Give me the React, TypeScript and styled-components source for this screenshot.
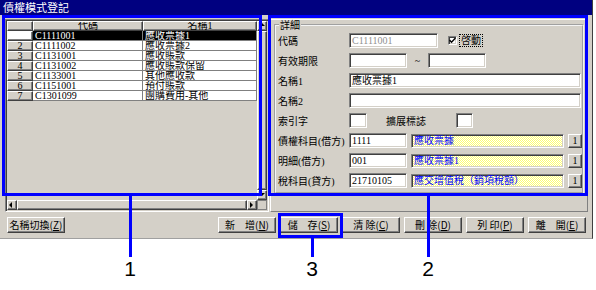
import React from 'react';
import styled, { createGlobalStyle } from 'styled-components';

const GlobalStyle = createGlobalStyle`
  html, body {
    margin: 0;
    padding: 0;
    background: #fff;
  }
  body {
    font-family: "Liberation Serif", "Noto Sans CJK TC", serif;
  }
`;

const face = `"Liberation Serif", "Noto Sans CJK TC", serif`;

const raised = `
  border: 1px solid;
  border-color: #fff #404040 #404040 #fff;
  box-shadow: inset -1px -1px #808080;
`;

const sunken = `
  border: 1px solid;
  border-color: #808080 #fff #fff #808080;
  box-shadow: inset 1px 1px #404040, inset -1px -1px #d4d0c8;
`;

const Stage = styled.div`
  position: relative;
  width: 596px;
  height: 290px;
  background: #fff;
  overflow: hidden;
`;

const Window = styled.div`
  box-sizing: border-box;
  width: 593px;
  height: 239px;
  background: #d4d0c8;
  border-right: 1px solid #404040;
  border-bottom: 1px solid #a0a0a0;
  display: flex;
  flex-direction: column;
  font-family: ${face};
  font-size: 10px;
  color: #000;
`;

const TitleBar = styled.div`
  height: 15px;
  background: #000080;
  color: #fff;
  font-family: "Noto Sans CJK TC", sans-serif;
  font-size: 11px;
  line-height: 15px;
  padding-left: 3px;
`;

const Body = styled.div`
  display: flex;
  flex-direction: column;
  padding: 4px 0 0 5px;
`;

const MainRow = styled.div`
  display: flex;
  gap: 1px;
  height: 193px;
`;

/* ---------- grid ---------- */

const GridFrame = styled.div`
  box-sizing: border-box;
  width: 264px;
  height: 193px;
  ${sunken}
  padding: 1px;
  display: grid;
  grid-template-columns: 250px 10px;
  grid-template-rows: 1fr 10px;
`;

const Table = styled.div`
  display: flex;
  flex-direction: column;
  overflow: hidden;
`;

const Row = styled.div`
  display: grid;
  grid-template-columns: 26px 110px 114px;
  height: 10px;
`;

const HeadCell = styled.div`
  box-sizing: border-box;
  ${raised}
  background: #d4d0c8;
  text-align: center;
  line-height: 8px;
  font-size: 10px;
  overflow: hidden;
  white-space: nowrap;
`;

const RowHead = styled(HeadCell)<{ $current?: boolean }>`
  background: ${p => (p.$current ? '#fff' : '#d4d0c8')};
`;

const Cell = styled.div<{ $selected?: boolean }>`
  box-sizing: border-box;
  border-right: 1px solid #808080;
  border-bottom: 1px solid #808080;
  background: ${p => (p.$selected ? '#000' : '#fff')};
  color: ${p => (p.$selected ? '#fff' : '#000')};
  padding-left: 2px;
  line-height: 9px;
  font-size: 10px;
  white-space: nowrap;
  overflow: hidden;
`;

const VScroll = styled.div`
  display: flex;
  flex-direction: column;
`;

const HScroll = styled.div`
  display: flex;
`;

const ArrowBtn = styled.div`
  box-sizing: border-box;
  width: 10px;
  height: 10px;
  ${raised}
  background: #d4d0c8;
  display: flex;
  align-items: center;
  justify-content: center;
  flex-shrink: 0;
`;

const Thumb = styled.div`
  box-sizing: border-box;
  flex: 1;
  ${raised}
  background: #d4d0c8;
`;

const Corner = styled.div`
  background: #d4d0c8;
  box-sizing: border-box;
  border: 1px solid #808080;
`;

const Tri = ({ dir }: { dir: 'up' | 'down' | 'left' | 'right' }) => {
  const pts = {
    up: '1,4 4,1 7,4',
    down: '1,2 4,5 7,2',
    left: '4,1 1,4 4,7',
    right: '2,1 5,4 2,7',
  }[dir];
  return (
    <svg width="8" height="8" viewBox="0 0 8 8">
      <polygon points={pts} fill="#000" />
    </svg>
  );
};

/* ---------- detail panel ---------- */

const DetailPanel = styled.div`
  box-sizing: border-box;
  width: 318px;
  height: 193px;
  border: 1px solid;
  border-color: #fff #808080 #808080 #fff;
  padding: 0 3px 0 3px;
`;

const GroupBox = styled.fieldset`
  margin: 0;
  padding: 3px 0 0 2px;
  height: 167px;
  border: 2px groove #f4f4f4;
  display: flex;
  flex-direction: column;
  gap: 5px;
`;

const Legend = styled.legend`
  padding: 0 1px;
  margin-left: 1px;
  font-family: "Noto Sans CJK TC", sans-serif;
  font-size: 10px;
  line-height: 10px;
`;

const FieldRow = styled.div`
  display: flex;
  align-items: center;
  height: 15px;
`;

const Label = styled.div<{ $w?: number; $gap?: number }>`
  width: ${p => p.$w ?? 71}px;
  margin-left: ${p => p.$gap ?? 0}px;
  flex-shrink: 0;
  font-size: 10px;
  white-space: nowrap;
`;

const Input = styled.div<{ $w: number; $gray?: boolean }>`
  box-sizing: border-box;
  width: ${p => p.$w}px;
  height: 15px;
  ${sunken}
  background: #fff;
  color: ${p => (p.$gray ? '#909090' : '#000')};
  padding-left: 2px;
  line-height: 13px;
  font-size: 10px;
  white-space: nowrap;
  overflow: hidden;
  flex-shrink: 0;
`;

const LookupField = styled(Input)`
  height: 14px;
  line-height: 12px;
  color: #0000ff;
  background-color: #ffffc0;
  background-image: repeating-conic-gradient(#ffff70 0 25%, #ffffff 0 50%);
  background-size: 2px 2px;
  margin-left: 4px;
`;

const PickBtn = styled.div`
  box-sizing: border-box;
  width: 14px;
  height: 14px;
  ${raised}
  background: #d4d0c8;
  margin-left: 4px;
  text-align: center;
  line-height: 12px;
  font-size: 10px;
`;

const Check = styled.div`
  display: flex;
  align-items: center;
  gap: 3px;
  margin-left: 10px;
`;

const CheckBox = styled.div`
  box-sizing: border-box;
  width: 9px;
  height: 9px;
  ${sunken}
  background: #fff;
  display: flex;
  align-items: center;
  justify-content: center;
`;

const FocusLabel = styled.span`
  outline: 1px dotted #000;
  padding: 0 1px;
  font-size: 10px;
  line-height: 11px;
`;

const Tilde = styled.span`
  width: 21px;
  text-align: center;
  font-size: 10px;
`;

/* ---------- buttons ---------- */

const ButtonRow = styled.div`
  display: flex;
  align-items: center;
  margin-top: 5px;
  height: 16px;
`;

const Spacer = styled.div`
  flex: 1;
`;

const ButtonGroup = styled.div`
  display: flex;
  gap: 4px;
  margin-right: 6px;
`;

const Button = styled.div<{ $indent?: number }>`
  box-sizing: border-box;
  width: 58px;
  height: 16px;
  margin-left: ${p => p.$indent ?? 0}px;
  ${raised}
  background: #d4d0c8;
  display: flex;
  align-items: center;
  justify-content: center;
  font-family: "Noto Sans CJK TC", sans-serif;
  font-size: 10px;
  line-height: 14px;
  white-space: pre;
`;

/* ---------- annotations ---------- */

const Box = styled.div<{ $x: number; $y: number; $w: number; $h: number }>`
  position: absolute;
  left: ${p => p.$x}px;
  top: ${p => p.$y}px;
  width: ${p => p.$w}px;
  height: ${p => p.$h}px;
  box-sizing: border-box;
  border: 3px solid #0000ff;
  pointer-events: none;
`;

const Leader = styled.div<{ $x: number; $y: number; $h: number }>`
  position: absolute;
  left: ${p => p.$x}px;
  top: ${p => p.$y}px;
  width: 3px;
  height: ${p => p.$h}px;
  background: #0000ff;
`;

const Callout = styled.div<{ $x: number }>`
  position: absolute;
  left: ${p => p.$x - 10}px;
  top: 257px;
  width: 20px;
  text-align: center;
  font-family: "Liberation Sans", Arial, sans-serif;
  font-size: 21px;
  line-height: 24px;
  color: #000;
`;

const rows = [
  ['C1111001', '應收票據1'],
  ['C1111002', '應收票據2'],
  ['C1131001', '應收賬款'],
  ['C1131002', '應收賬款保留'],
  ['C1133001', '其他應收款'],
  ['C1151001', '預付賬款'],
  ['C1301099', '團購費用-其他'],
];

const lookups = [
  ['債權科目(借方)', '1111', '應收票據'],
  ['明細(借方)', '001', '應收票據1'],
  ['稅科目(貸方)', '21710105', '應交增值稅（銷項稅額）'],
];

const buttons = [
  ['新　增', 'N'],
  ['儲　存', 'S'],
  ['清 除', 'C'],
  ['刪 除', 'D'],
  ['列 印', 'P'],
  ['離　開', 'E'],
];

export default function App() {
  return (
    <Stage>
      <GlobalStyle />
      <Window>
        <TitleBar>債權模式登記</TitleBar>
        <Body>
          <MainRow>
            <GridFrame>
              <Table>
                <Row>
                  <HeadCell />
                  <HeadCell>代碼</HeadCell>
                  <HeadCell>名稱1</HeadCell>
                </Row>
                {rows.map(([code, name], i) => (
                  <Row key={code}>
                    <RowHead $current={i === 0}>{i === 0 ? '' : i + 1}</RowHead>
                    <Cell $selected={i === 0}>{code}</Cell>
                    <Cell $selected={i === 0}>{name}</Cell>
                  </Row>
                ))}
              </Table>
              <VScroll>
                <ArrowBtn>
                  <Tri dir="up" />
                </ArrowBtn>
                <Thumb />
                <ArrowBtn>
                  <Tri dir="down" />
                </ArrowBtn>
              </VScroll>
              <HScroll>
                <ArrowBtn>
                  <Tri dir="left" />
                </ArrowBtn>
                <Thumb />
                <ArrowBtn>
                  <Tri dir="right" />
                </ArrowBtn>
              </HScroll>
              <Corner />
            </GridFrame>

            <DetailPanel>
              <GroupBox>
                <Legend>詳細</Legend>
                <FieldRow>
                  <Label>代碼</Label>
                  <Input $w={89} $gray>
                    C1111001
                  </Input>
                  <Check>
                    <CheckBox>
                      <svg width="7" height="7" viewBox="0 0 7 7">
                        <polyline points="0.5,3 2.5,5.2 6.5,1" fill="none" stroke="#000" strokeWidth="1.4" />
                      </svg>
                    </CheckBox>
                    <FocusLabel>啓動</FocusLabel>
                  </Check>
                </FieldRow>
                <FieldRow>
                  <Label>有效期限</Label>
                  <Input $w={58} />
                  <Tilde>~</Tilde>
                  <Input $w={58} />
                </FieldRow>
                <FieldRow>
                  <Label>名稱1</Label>
                  <Input $w={232}>應收票據1</Input>
                </FieldRow>
                <FieldRow>
                  <Label>名稱2</Label>
                  <Input $w={232} />
                </FieldRow>
                <FieldRow>
                  <Label>索引字</Label>
                  <Input $w={18} />
                  <Label $w={70} $gap={19}>
                    擴展標誌
                  </Label>
                  <Input $w={17} />
                </FieldRow>
                {lookups.map(([label, code, name]) => (
                  <FieldRow key={label}>
                    <Label>{label}</Label>
                    <Input $w={58}>{code}</Input>
                    <LookupField $w={153}>{name}</LookupField>
                    <PickBtn>1</PickBtn>
                  </FieldRow>
                ))}
              </GroupBox>
            </DetailPanel>
          </MainRow>

          <ButtonRow>
            <Button $indent={2}>
              名稱切換(<u>Z</u>)
            </Button>
            <Spacer />
            <ButtonGroup>
              {buttons.map(([text, key]) => (
                <Button key={key}>
                  {text}(<u>{key}</u>)
                </Button>
              ))}
            </ButtonGroup>
          </ButtonRow>
        </Body>
      </Window>

      <Box $x={2} $y={15} $w={260} $h={181} />
      <Box $x={268} $y={15} $w={320} $h={181} />
      <Box $x={278} $y={213} $w={65} $h={25} />

      <Leader $x={129} $y={195} $h={62} />
      <Leader $x={427} $y={195} $h={62} />
      <Leader $x={311} $y={237} $h={20} />

      <Callout $x={130}>1</Callout>
      <Callout $x={428}>2</Callout>
      <Callout $x={312}>3</Callout>
    </Stage>
  );
}
